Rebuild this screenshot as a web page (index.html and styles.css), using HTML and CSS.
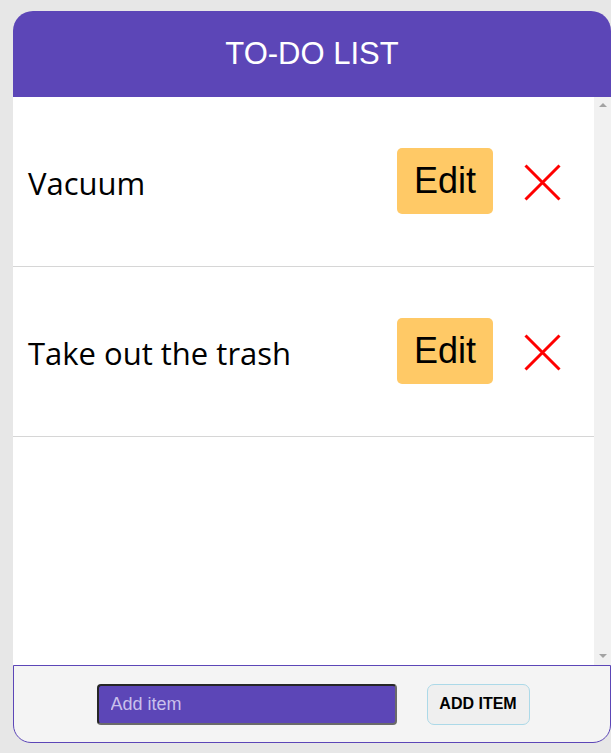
FILE: index.html
```html
<!DOCTYPE html>
<html>
<head>
<meta charset="utf-8">
<link rel="stylesheet" href="styles.css">
</head>
<body>
<div class="card">
  <header class="card-header">TO-DO LIST</header>
  <div class="list-wrap">
    <ul class="list">
      <li class="item">
        <span class="item-text">Vacuum</span>
        <button class="edit-btn">Edit</button>
        <button class="del-btn" aria-label="Delete">
          <svg width="37" height="37" viewBox="0 0 37 37"><path d="M1.5 1.5L35.5 35.5M35.5 1.5L1.5 35.5" stroke="#ff0000" stroke-width="3" fill="none"/></svg>
        </button>
      </li>
      <li class="item">
        <span class="item-text">Take out the trash</span>
        <button class="edit-btn">Edit</button>
        <button class="del-btn" aria-label="Delete">
          <svg width="37" height="37" viewBox="0 0 37 37"><path d="M1.5 1.5L35.5 35.5M35.5 1.5L1.5 35.5" stroke="#ff0000" stroke-width="3" fill="none"/></svg>
        </button>
      </li>
    </ul>
    <div class="scrollbar" aria-hidden="true">
      <span class="arrow arrow-up"></span>
      <span class="arrow arrow-down"></span>
    </div>
  </div>
  <footer class="card-footer">
    <input class="add-input" type="text" placeholder="Add item">
    <button class="add-btn">ADD ITEM</button>
  </footer>
</div>
</body>
</html>
```

FILE: styles.css
```css
html, body {
  margin: 0;
  padding: 0;
  background: #e7e7e7;
  overflow: hidden;
}
body {
  padding: 11px 0 0 13px;
  font-family: "Liberation Sans", Arial, sans-serif;
}
.card {
  width: 598px;
  display: flex;
  flex-direction: column;
}
.card-header {
  height: 86px;
  background: #5c46b7;
  color: #ffffff;
  border-radius: 20px 20px 0 0;
  display: flex;
  align-items: center;
  justify-content: center;
  font-size: 31px;
  padding-bottom: 1px;
  box-sizing: border-box;
}
.list-wrap {
  height: 568px;
  display: flex;
  background: #ffffff;
}
.list {
  flex: 1;
  list-style: none;
  margin: 0;
  padding: 0;
  overflow: hidden;
}
.scrollbar {
  width: 17px;
  background: #f1f1f1;
  display: flex;
  flex-direction: column;
  justify-content: space-between;
  align-items: center;
  padding: 6px 0 7px;
  box-sizing: border-box;
}
.arrow {
  width: 0;
  height: 0;
  border-left: 4px solid transparent;
  border-right: 4px solid transparent;
}
.arrow-up {
  border-bottom: 4px solid #a3a3a3;
}
.arrow-down {
  border-top: 4px solid #a3a3a3;
}
.item {
  height: 170px;
  box-sizing: border-box;
  border-bottom: 1px solid #d6d6d6;
  display: flex;
  align-items: center;
  padding: 0 33px 0 15px;
}
.item-text {
  flex: 1;
  font-family: "Open Sans", sans-serif;
  font-size: 31px;
  color: #000;
  padding-top: 2px;
}
.edit-btn {
  height: 66px;
  padding: 0 17px;
  border: none;
  border-radius: 5px;
  background: #ffc966;
  font-family: "Liberation Sans", Arial, sans-serif;
  font-size: 36px;
  color: #000;
  margin-top: -2px;
}
.del-btn {
  margin-left: 31px;
  padding: 0;
  border: none;
  background: none;
  width: 37px;
  height: 37px;
  display: flex;
  margin-top: 2px;
}
.card-footer {
  height: 78px;
  box-sizing: border-box;
  background: #f4f4f4;
  border: 1px solid #5c46b7;
  border-radius: 0 0 18px 18px;
  display: flex;
  align-items: center;
  justify-content: center;
  gap: 30px;
  padding-left: 2px;
}
.add-input {
  width: 300px;
  height: 41px;
  box-sizing: border-box;
  background: #5c46b7;
  border: 2px solid;
  border-color: #262626 #6a6a6a #6a6a6a #262626;
  border-radius: 4px;
  padding: 0 12px;
  font-family: "Liberation Sans", Arial, sans-serif;
  font-size: 18px;
  color: #fff;
}
.add-input::placeholder {
  color: #c9c0ec;
}
.add-btn {
  width: 103px;
  height: 41px;
  box-sizing: border-box;
  background: #efefef;
  border: 1px solid #acd9e8;
  border-radius: 7px;
  font-family: "Liberation Sans", Arial, sans-serif;
  font-weight: bold;
  font-size: 16px;
  color: #000;
  padding: 0;
}
```
